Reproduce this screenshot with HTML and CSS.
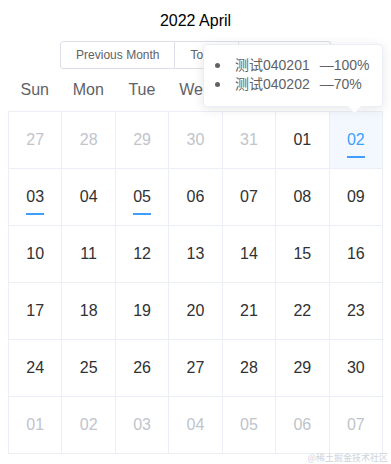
FILE: index.html
```html
<!DOCTYPE html>
<html lang="zh-CN">
<head>
    <meta charset="UTF-8">
    <title>Calendar</title>
    <link rel="stylesheet" href="styles.css">
</head>
<body>
    <div class="calendar">
        <div class="cal-title">2022 April</div>
        <div class="btn-group">
            <button class="btn">Previous Month</button>
            <button class="btn">Today</button>
            <button class="btn">Next Month</button>
        </div>

        <div class="week-head">
            <div>Sun</div><div>Mon</div><div>Tue</div><div>Wed</div><div>Thu</div><div>Fri</div><div>Sat</div>
        </div>

        <div class="grid">
            <div class="cell other">27</div>
            <div class="cell other">28</div>
            <div class="cell other">29</div>
            <div class="cell other">30</div>
            <div class="cell other">31</div>
            <div class="cell">01</div>
            <div class="cell selected marked">02</div>

            <div class="cell marked">03</div>
            <div class="cell">04</div>
            <div class="cell marked">05</div>
            <div class="cell">06</div>
            <div class="cell">07</div>
            <div class="cell">08</div>
            <div class="cell">09</div>

            <div class="cell">10</div>
            <div class="cell">11</div>
            <div class="cell">12</div>
            <div class="cell">13</div>
            <div class="cell">14</div>
            <div class="cell">15</div>
            <div class="cell">16</div>

            <div class="cell">17</div>
            <div class="cell">18</div>
            <div class="cell">19</div>
            <div class="cell">20</div>
            <div class="cell">21</div>
            <div class="cell">22</div>
            <div class="cell">23</div>

            <div class="cell">24</div>
            <div class="cell">25</div>
            <div class="cell">26</div>
            <div class="cell">27</div>
            <div class="cell">28</div>
            <div class="cell">29</div>
            <div class="cell">30</div>

            <div class="cell other">01</div>
            <div class="cell other">02</div>
            <div class="cell other">03</div>
            <div class="cell other">04</div>
            <div class="cell other">05</div>
            <div class="cell other">06</div>
            <div class="cell other">07</div>
        </div>

        <!-- popover sopra la cella selezionata -->
        <div class="popover">
            <ul>
                <li>测试040201<span class="pct">—100%</span></li>
                <li>测试040202<span class="pct">—70%</span></li>
            </ul>
        </div>

        <div class="watermark">@稀土掘金技术社区</div>
    </div>
</body>
</html>
```

FILE: styles.css
```css
html, body {
    margin: 0;
    background: #fff;
}
body {
    font-family: "Liberation Sans", Arial, "Noto Sans CJK SC", sans-serif;
    color: #303133;
}
.calendar {
    position: relative;
    width: 391px;
    height: 464px;
    padding: 10px 8px 0 8px;
    box-sizing: border-box;
}
.cal-title {
    text-align: center;
    font-size: 16px;
    line-height: 22px;
    color: #000;
}
.btn-group {
    display: flex;
    justify-content: center;
    margin-top: 9px;
}
.btn {
    font-family: inherit;
    font-size: 12px;
    line-height: 12px;
    height: 28px;
    padding: 7px 15px;
    color: #606266;
    background: #fff;
    border: 1px solid #dcdfe6;
    margin: 0;
    cursor: pointer;
}
.btn + .btn {
    border-left: none;
}
.btn:first-child {
    border-radius: 3px 0 0 3px;
}
.btn:last-child {
    border-radius: 0 3px 3px 0;
}
.week-head {
    display: grid;
    grid-template-columns: repeat(7, 1fr);
    padding: 12px 0;
    font-size: 16px;
    line-height: 18px;
    color: #606266;
    text-align: center;
}
.grid {
    display: grid;
    grid-template-columns: repeat(7, 1fr);
    grid-auto-rows: 57px;
    width: 375px;
    box-sizing: border-box;
    border-top: 1px solid #ebeef5;
    border-left: 1px solid #ebeef5;
}
.cell {
    position: relative;
    display: flex;
    align-items: center;
    justify-content: center;
    border-right: 1px solid #ebeef5;
    border-bottom: 1px solid #ebeef5;
    font-size: 16px;
    color: #303133;
}
.cell.other {
    color: #c0c4cc;
}
.cell.selected {
    background: #f2f8fe;
    color: #409eff;
}
.cell.marked::after {
    content: "";
    position: absolute;
    left: 50%;
    top: 44px;
    width: 18px;
    height: 2px;
    margin-left: -9px;
    background: #409eff;
}
.popover {
    position: absolute;
    left: 203px;
    top: 44px;
    width: 180px;
    height: 63px;
    box-sizing: border-box;
    background: #fff;
    border: 1px solid #ebeef5;
    border-radius: 4px;
    box-shadow: 0 2px 12px rgba(0, 0, 0, 0.1);
    font-size: 14px;
    color: #606266;
}
.popover::after {
    content: "";
    position: absolute;
    left: 145px;
    bottom: -6px;
    width: 10px;
    height: 10px;
    background: #fff;
    border-right: 1px solid #ebeef5;
    border-bottom: 1px solid #ebeef5;
    transform: rotate(45deg);
}
.popover ul {
    list-style: none;
    margin: 0;
    padding: 11px 0 0 11px;
    line-height: 19px;
}
.popover li {
    display: flex;
    align-items: center;
}
.popover li::before {
    content: "";
    width: 5px;
    height: 5px;
    border-radius: 50%;
    background: #606266;
    margin-right: 15px;
}
.pct {
    margin-left: 10px;
}
.watermark {
    position: absolute;
    right: 3px;
    bottom: 1px;
    font-size: 9px;
    line-height: 11px;
    color: #cfd2d8;
    font-family: "Noto Sans CJK SC", sans-serif;
}
```
